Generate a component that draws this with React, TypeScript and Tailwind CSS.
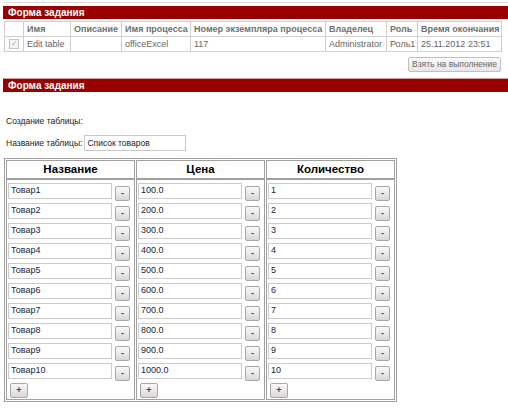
import React from "react";

const tasks = [
  { name: "Edit table", desc: "", proc: "officeExcel", num: "117", owner: "Administrator", role: "Роль1", time: "25.11.2012 23:51" },
];

const rows = Array.from({ length: 10 }, (_, i) => ({
  name: `Товар${i + 1}`,
  price: `${(i + 1) * 100}.0`,
  qty: `${i + 1}`,
}));

function SmallButton({ label, wide }: { label: string; wide?: boolean }) {
  return (
    <span
      className={`inline-flex h-[15px] ${wide ? "w-[18px]" : "w-[15px]"} items-center justify-center rounded-[2px] border border-[#a8a8a8] bg-gradient-to-b from-[#fafafa] to-[#d8d8d8] text-[9px] font-bold leading-none text-[#444]`}
    >
      {label}
    </span>
  );
}

function EditCell({ value }: { value: string }) {
  return (
    <div className="flex h-[20px] items-center pl-[1px]">
      <div className="flex h-[16px] w-[104px] items-center border border-[#cccccc] px-[2px] text-[9px] text-[#1c1c40]">
        {value}
      </div>
      <div className="ml-[3px]">
        <SmallButton label="-" />
      </div>
    </div>
  );
}

function Column({ title, values }: { title: string; values: string[] }) {
  return (
    <td className="w-[129px] border border-[#a0a0a0] p-0 align-top">
      <div className="flex h-[19px] items-center justify-center border-b-2 border-[#a0a0a0] text-[11.5px] font-bold text-black">
        {title}
      </div>
      <div className="pt-[1px]">
        {values.map((v, i) => (
          <EditCell key={i} value={v} />
        ))}
      </div>
      <div className="flex h-[18px] items-center pl-[3px]">
        <SmallButton label="+" wide />
      </div>
    </td>
  );
}

function RedBar({ title }: { title: string }) {
  return (
    <div className="ml-[3px] flex h-[13px] items-center bg-[#990000] pl-[5px] text-[10px] font-bold leading-none text-white">
      {title}
    </div>
  );
}

export default function App() {
  const heads = ["", "Имя", "Описание", "Имя процесса", "Номер экземпляра процесса", "Владелец", "Роль", "Время окончания"];
  const widths = ["w-[19px]", "w-[47px]", "w-[51px]", "w-[69px]", "w-[135px]", "w-[61px]", "w-[31px]", "w-[84px]"];
  const cell = "border border-[#cfcfcf] pl-[3px] pr-[1px] whitespace-nowrap";

  return (
    <div className="h-[409px] w-[508px] overflow-hidden bg-white font-['Liberation_Sans',Arial,sans-serif]">
      {/* task header */}
      <div className="pt-[2px]">
        <div className="ml-[3px] h-px bg-[#d8d8d8]" />
        <div className="mt-[3px]">
          <RedBar title="Форма задания" />
        </div>
      </div>

      <table className="ml-[4px] mt-[2px] w-[497px] table-fixed border-collapse text-[9px] leading-[12px] text-[#666]">
        <colgroup>
          {widths.map((w, i) => (
            <col key={i} className={w} />
          ))}
        </colgroup>
        <thead>
          <tr className="h-[15px]">
            {heads.map((h, i) => (
              <th key={i} className={`${cell} text-left font-bold text-[#707070]`}>
                {h}
              </th>
            ))}
          </tr>
        </thead>
        <tbody>
          {tasks.map((t, i) => (
            <tr key={i} className="h-[15px]">
              <td className={cell}>
                <span className="ml-[1px] flex h-[10px] w-[10px] items-center justify-center border border-[#c4c4c4] bg-[#f4f4f4] text-[8px] leading-none text-[#aaa]">
                  ✓
                </span>
              </td>
              <td className={cell}>{t.name}</td>
              <td className={cell}>{t.desc}</td>
              <td className={cell}>{t.proc}</td>
              <td className={cell}>{t.num}</td>
              <td className={cell}>{t.owner}</td>
              <td className={cell}>{t.role}</td>
              <td className={cell}>{t.time}</td>
            </tr>
          ))}
        </tbody>
      </table>

      <div className="mr-[7px] mt-[5px] flex justify-end">
        <span className="inline-flex h-[15px] items-center rounded-[2px] border border-[#c0c0c0] bg-gradient-to-b from-[#fbfbfb] to-[#e6e6e6] px-[3px] text-[8.5px] leading-none text-[#666]">
          Взять на выполнение
        </span>
      </div>

      {/* task form */}
      <div className="mt-[6px]">
        <div className="ml-[3px] h-px bg-[#d8a0a0]" />
        <RedBar title="Форма задания" />
      </div>

      <div className="ml-[6px] mt-[24px] text-[8.5px] leading-[11px] text-[#222]">Создание таблицы:</div>

      <div className="ml-[6px] mt-[8px] flex h-[16px] items-center text-[8.5px] text-[#222]">
        <span>Название таблицы:</span>
        <div className="ml-[2px] flex h-[16px] w-[102px] items-center border border-[#c8c8c8] px-[2px]">Список товаров</div>
      </div>

      <table className="ml-[4px] mt-[7px] border-separate border-spacing-px border border-[#a0a0a0]">
        <tbody>
          <tr>
            <Column title="Название" values={rows.map((r) => r.name)} />
            <Column title="Цена" values={rows.map((r) => r.price)} />
            <Column title="Количество" values={rows.map((r) => r.qty)} />
          </tr>
        </tbody>
      </table>
    </div>
  );
}
